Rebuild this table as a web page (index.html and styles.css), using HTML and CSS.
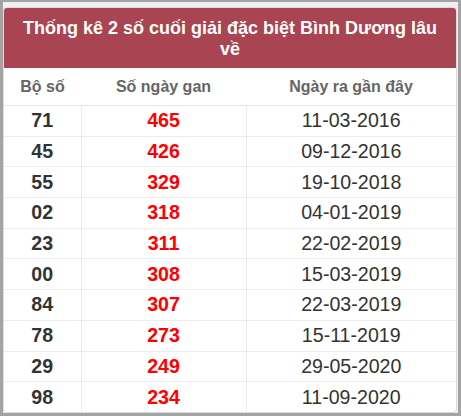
FILE: index.html
```html
<!DOCTYPE html>
<html lang="vi">
<head>
<meta charset="utf-8">
<link rel="stylesheet" href="styles.css">
</head>
<body>
<div class="frame">
  <div class="card">
    <div class="title">Thống kê 2 số cuối giải đặc biệt Bình Dương lâu về</div>
    <table class="stats">
      <colgroup>
        <col class="c1"><col class="c2"><col class="c3">
      </colgroup>
      <thead>
        <tr><th>Bộ số</th><th>Số ngày gan</th><th>Ngày ra gần đây</th></tr>
      </thead>
      <tbody>
        <tr><td class="num">71</td><td class="gan">465</td><td class="date">11-03-2016</td></tr>
        <tr><td class="num">45</td><td class="gan">426</td><td class="date">09-12-2016</td></tr>
        <tr><td class="num">55</td><td class="gan">329</td><td class="date">19-10-2018</td></tr>
        <tr><td class="num">02</td><td class="gan">318</td><td class="date">04-01-2019</td></tr>
        <tr><td class="num">23</td><td class="gan">311</td><td class="date">22-02-2019</td></tr>
        <tr><td class="num">00</td><td class="gan">308</td><td class="date">15-03-2019</td></tr>
        <tr><td class="num">84</td><td class="gan">307</td><td class="date">22-03-2019</td></tr>
        <tr><td class="num">78</td><td class="gan">273</td><td class="date">15-11-2019</td></tr>
        <tr><td class="num">29</td><td class="gan">249</td><td class="date">29-05-2020</td></tr>
        <tr><td class="num">98</td><td class="gan">234</td><td class="date">11-09-2020</td></tr>
      </tbody>
    </table>
  </div>
</div>
</body>
</html>
```
FILE: styles.css
```css
html, body {
  margin: 0;
  padding: 0;
}
body {
  font-family: "Liberation Sans", Arial, sans-serif;
  background: #eeeeee;
}
.frame {
  width: 461px;
  height: 416px;
  box-sizing: border-box;
  border-style: solid;
  border-color: #a3a3a3;
  border-width: 2px 3px 3px 3px;
  background: #efefef;
  padding-top: 5px;
  overflow: hidden;
}
.card {
  width: 454px;
  box-sizing: border-box;
  border: 1px solid #dcdcdc;
  border-radius: 4px;
  background: #fff;
  overflow: hidden;
}
.title {
  background: #a94453;
  color: #fff;
  font-weight: bold;
  font-size: 18px;
  line-height: 21px;
  text-align: center;
  padding: 10px 15px 8px;
}
.stats {
  width: 100%;
  border-collapse: collapse;
  table-layout: fixed;
}
.c1 { width: 77px; }
.c2 { width: 165px; }
.stats th {
  height: 37px;
  padding: 0;
  font-size: 16px;
  font-weight: bold;
  color: #666;
  text-align: center;
  border-bottom: 1px solid #e6e6e6;
}
.stats td {
  height: 29.7px;
  padding: 0;
  text-align: center;
  font-size: 19.6px;
  border-bottom: 1px solid #ececec;
  border-right: 1px solid #ececec;
}
.stats td:last-child { border-right: none; }
.stats tr:last-child td { border-bottom: none; }
.num { font-weight: bold; color: #333; }
.gan { font-weight: bold; color: #ff0000; }
.date { color: #333; }
```
